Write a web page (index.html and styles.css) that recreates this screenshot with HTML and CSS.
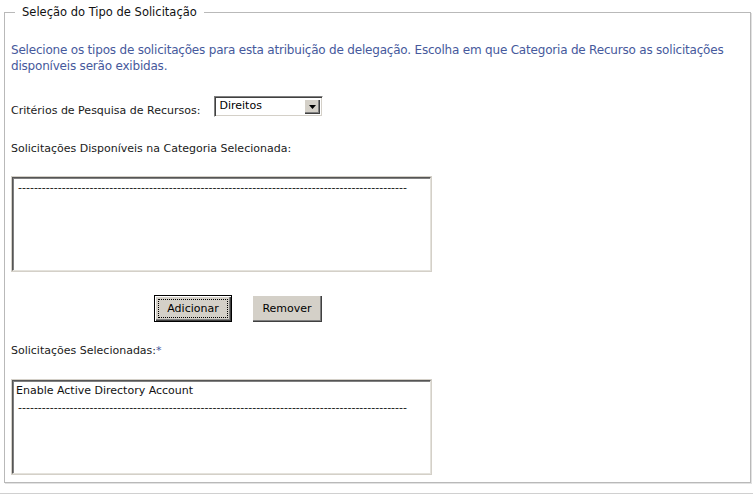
FILE: index.html
```html
<!DOCTYPE html>
<html lang="pt">
<head>
<meta charset="utf-8">
<title>Seleção do Tipo de Solicitação</title>
<link rel="stylesheet" href="styles.css">
</head>
<body>
<div class="page">
  <fieldset class="group">
    <legend class="group-title">Seleção do Tipo de Solicitação</legend>
    <p class="intro">Selecione os tipos de solicitações para esta atribuição de delegação. Escolha em que Categoria de Recurso as solicitações disponíveis serão exibidas.</p>
    <div class="criteria">
      <span class="label criteria-label">Critérios de Pesquisa de Recursos:</span>
      <div class="combo">
        <span class="combo-value">Direitos</span>
        <span class="combo-btn"><svg width="7" height="4" viewBox="0 0 7 4"><path d="M0 0h7L3.5 4z" fill="#000"/></svg></span>
      </div>
    </div>
    <div class="label avail-label">Solicitações Disponíveis na Categoria Selecionada:</div>
    <div class="listbox">
      <div class="listbox-inner">
        <div class="opt sep">--------------------------------------------------------------------------------------------------</div>
      </div>
    </div>
    <div class="actions">
      <button class="btn btn-default" type="button"><span class="focus-ring">Adicionar</span></button>
      <button class="btn btn-plain" type="button">Remover</button>
    </div>
    <div class="label sel-label">Solicitações Selecionadas:<span class="req">*</span></div>
    <div class="listbox">
      <div class="listbox-inner">
        <div class="opt">Enable Active Directory Account</div>
        <div class="opt sep">--------------------------------------------------------------------------------------------------</div>
      </div>
    </div>
  </fieldset>
  <div class="next-section"></div>
</div>
</body>
</html>
```

FILE: styles.css
```css
html, body {
  margin: 0;
  padding: 0;
  background: #ffffff;
}

body {
  font-family: "DejaVu Sans", Verdana, sans-serif;
  font-size: 11px;
  color: #1a1a1a;
  width: 753px;
  height: 494px;
  overflow: hidden;
}

.page {
  padding-top: 4px;
}

.group {
  margin: 0 2px 0 4px;
  padding: 0 6px 7px 6px;
  border: 1px solid #b9b9b9;
  box-shadow: 1px 1px 0 #e2e2e2;
  min-width: 0;
}

.group-title {
  margin-left: 4px;
  padding: 0 7px;
  font-size: 11.5px;
  line-height: 16px;
  color: #111;
}

.intro {
  margin: 22px 0 0 0;
  font-size: 12px;
  letter-spacing: -0.2px;
  line-height: 16px;
  color: #46599c;
}

.label {
  font-size: 11px;
  line-height: 14px;
  color: #1a1a1a;
}

.criteria {
  display: flex;
  align-items: flex-start;
  margin-top: 22px;
}

.criteria-label {
  margin-top: 8px;
}

.combo {
  display: flex;
  align-items: stretch;
  box-sizing: border-box;
  width: 109px;
  height: 21px;
  margin-left: 14px;
  background: #fff;
  border-top: 1px solid #808080;
  border-left: 1px solid #808080;
  border-right: 1px solid #ffffff;
  border-bottom: 1px solid #ffffff;
  box-shadow: inset 1px 1px 0 #404040, inset -1px -1px 0 #d4d0c8;
  padding: 2px;
}

.combo-value {
  flex: 1;
  font-size: 11px;
  line-height: 14px;
  padding-left: 2px;
  color: #000;
}

.combo-btn {
  width: 16px;
  display: flex;
  align-items: center;
  justify-content: center;
  background: #d4d0c8;
  box-shadow: inset 1px 1px 0 #ffffff, inset -1px -1px 0 #404040, inset -2px -2px 0 #808080;
}

.avail-label {
  margin-top: 24px;
}

.listbox {
  box-sizing: border-box;
  width: 421px;
  height: 96px;
  border: 1px solid #d4d0c8;
  background: #fff;
}

.avail-label + .listbox {
  margin-top: 20px;
}

.listbox-inner {
  box-sizing: border-box;
  height: 100%;
  border-top: 1px solid #555555;
  border-left: 1px solid #555555;
  border-right: 1px solid #e4e2dc;
  border-bottom: 1px solid #e4e2dc;
  box-shadow: inset 1px 1px 0 #808080;
  padding: 1px 3px;
}

.opt {
  font-size: 11px;
  line-height: 17px;
  color: #111;
  white-space: nowrap;
}

.opt.sep {
  padding-left: 2px;
}

.actions {
  display: flex;
  gap: 20px;
  margin: 23px 0 0 143px;
}

.btn {
  font-family: "DejaVu Sans", Verdana, sans-serif;
  font-size: 11px;
  color: #000;
  height: 27px;
  background: #d4d0c8;
  border: none;
  padding: 0;
  margin: 0;
  box-sizing: border-box;
}

.btn-default {
  width: 78px;
  border: 1px solid #000;
  box-shadow: inset 1px 1px 0 #ffffff, inset -1px -1px 0 #404040, inset -2px -2px 0 #808080;
  padding: 3px;
  display: flex;
}

.focus-ring {
  flex: 1;
  display: flex;
  align-items: center;
  justify-content: center;
  border: 1px dotted #000;
}

.btn-plain {
  width: 70px;
  box-shadow: inset 1px 1px 0 #ffffff, inset -1px -1px 0 #404040, inset -2px -2px 0 #808080;
}

.sel-label {
  margin-top: 22px;
}

.sel-label + .listbox {
  margin-top: 21px;
}

.req {
  color: #46599c;
}

.next-section {
  margin-top: 10px;
  border-top: 1px solid #d0d0d0;
  height: 4px;
}
```
